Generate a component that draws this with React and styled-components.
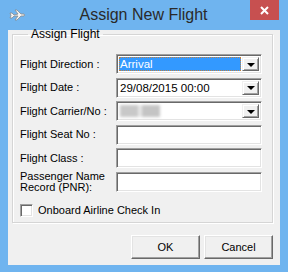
import React from "react";
import styled, { createGlobalStyle } from "styled-components";

const Global = createGlobalStyle`
  html, body {
    margin: 0;
    padding: 0;
    background: #6fb4ef;
  }
  * {
    box-sizing: border-box;
  }
`;

const Window = styled.div`
  width: 288px;
  height: 272px;
  background: #6fb4ef;
  display: flex;
  flex-direction: column;
  padding: 0 8px 7px 8px;
  font-family: "Liberation Sans", Arial, sans-serif;
  font-size: 11px;
  color: #000;
`;

const TitleBar = styled.div`
  height: 30px;
  flex-shrink: 0;
  display: flex;
  align-items: center;
  position: relative;
`;

const TitleIcon = styled.svg`
  width: 16px;
  height: 12px;
  margin: 0 0 1px 1px;
`;

const Title = styled.div`
  flex: 1;
  text-align: center;
  font-size: 16px;
  color: #2a2a2a;
  margin-right: 18px;
  padding-bottom: 1px;
`;

const Close = styled.div`
  position: absolute;
  top: 0;
  right: 1px;
  width: 29px;
  height: 20px;
  background: #c75050;
  color: #fff;
  display: flex;
  align-items: center;
  justify-content: center;
`;

const Client = styled.div`
  flex: 1;
  background: #f0f0f0;
  display: flex;
  flex-direction: column;
  padding: 0 7px 6px 4px;
`;

const Group = styled.fieldset`
  margin: 0;
  padding: 15px 10px 5px 7px;
  border: 1px solid #d5d5d5;
  box-shadow: inset 1px 1px 0 #fff, 1px 1px 0 #fff;
  border-radius: 0;
  display: flex;
  flex-direction: column;
`;

const Legend = styled.legend`
  padding: 0 3px;
  margin-left: 8px;
  font-size: 12px;
  line-height: 9px;
`;

const Form = styled.div`
  display: grid;
  grid-template-columns: 96px 146px;
  grid-auto-rows: 20px;
  row-gap: 3.5px;
  align-items: center;
`;

const Label = styled.div`
  line-height: 11px;
  font-size: 11px;
  white-space: ${(p) => (p.wrap ? "normal" : "nowrap")};
`;

const Sunken = styled.div`
  height: 20px;
  border: 1px solid;
  border-color: #a0a0a0 #fff #fff #a0a0a0;
  box-shadow: inset 1px 1px 0 #696969, inset -1px -1px 0 #e3e3e3;
  background: #fff;
  display: flex;
  align-items: center;
  padding: 2px;
`;

const ComboText = styled.div`
  flex: 1;
  height: 100%;
  display: flex;
  align-items: center;
  padding-left: 1px;
  font-size: 11.5px;
  background: ${(p) => (p.selected ? "#3399ff" : "transparent")};
  color: ${(p) => (p.selected ? "#fff" : "#000")};
  outline: ${(p) => (p.selected ? "1px dotted #c08040" : "none")};
  outline-offset: -1px;
`;

const Blur = styled.div`
  width: 40px;
  height: 12px;
  background: linear-gradient(90deg, #c8c8c8 0 45%, #e6e6e6 45% 55%, #c4c4c4 55% 100%);
  filter: blur(1.5px);
`;

const DropButton = styled.div`
  width: 17px;
  height: 100%;
  margin-left: 1px;
  background: #f0f0f0;
  border: 1px solid;
  border-color: #f0f0f0 #696969 #696969 #f0f0f0;
  box-shadow: inset 1px 1px 0 #fff, inset -1px -1px 0 #a0a0a0;
  display: flex;
  align-items: center;
  justify-content: center;
  &::after {
    content: "";
    border-left: 4px solid transparent;
    border-right: 4px solid transparent;
    border-top: 4px solid #000;
    margin-top: 1px;
  }
`;

const CheckRow = styled.label`
  display: flex;
  align-items: center;
  gap: 5px;
  margin-top: 12.5px;
  font-size: 11px;
  line-height: 13px;
`;

const CheckBox = styled.span`
  width: 13px;
  height: 13px;
  background: #fff;
  border: 1px solid;
  border-color: #a0a0a0 #fff #fff #a0a0a0;
  box-shadow: inset 1px 1px 0 #696969, inset -1px -1px 0 #e3e3e3;
`;

const Buttons = styled.div`
  display: flex;
  justify-content: flex-end;
  gap: 4px;
  margin-top: 12px;
`;

const Button = styled.div`
  width: 69px;
  height: 24px;
  background: #f0f0f0;
  border: 1px solid;
  border-color: #fff #696969 #696969 #fff;
  box-shadow: inset -1px -1px 0 #a0a0a0, inset 1px 1px 0 #e3e3e3;
  display: flex;
  align-items: center;
  justify-content: center;
  font-size: 11px;
`;

function Combo({ children, selected }) {
  return (
    <Sunken>
      <ComboText selected={selected}>{children}</ComboText>
      <DropButton />
    </Sunken>
  );
}

export default function App() {
  return (
    <>
      <Global />
      <Window>
        <TitleBar>
          <TitleIcon viewBox="0 0 16 12">
            <path
              d="M1 4 L3 4 L5 6 L9 5 L6 1 L8 1 L12 5 L15 5 Q16 6 15 7 L12 7 L8 11 L6 11 L9 7 L5 7 L3 9 L1 9 L2 6.5 Z"
              fill="#f4f4f4"
              stroke="#8a8a8a"
              strokeWidth="0.8"
            />
          </TitleIcon>
          <Title>Assign New Flight</Title>
          <Close>
            <svg width="9" height="9" viewBox="0 0 9 9">
              <path d="M1 1 L8 8 M8 1 L1 8" stroke="#fff" strokeWidth="2" />
            </svg>
          </Close>
        </TitleBar>
        <Client>
          <Group>
            <Legend>Assign Flight</Legend>
            <Form>
              <Label>Flight Direction :</Label>
              <Combo selected>Arrival</Combo>
              <Label>Flight Date :</Label>
              <Combo>29/08/2015 00:00</Combo>
              <Label>Flight Carrier/No :</Label>
              <Combo>
                <Blur />
              </Combo>
              <Label>Flight Seat No :</Label>
              <Sunken />
              <Label>Flight Class :</Label>
              <Sunken />
              <Label wrap>Passenger Name Record (PNR):</Label>
              <Sunken />
            </Form>
            <CheckRow>
              <CheckBox />
              Onboard Airline Check In
            </CheckRow>
          </Group>
          <Buttons>
            <Button>OK</Button>
            <Button>Cancel</Button>
          </Buttons>
        </Client>
      </Window>
    </>
  );
}
